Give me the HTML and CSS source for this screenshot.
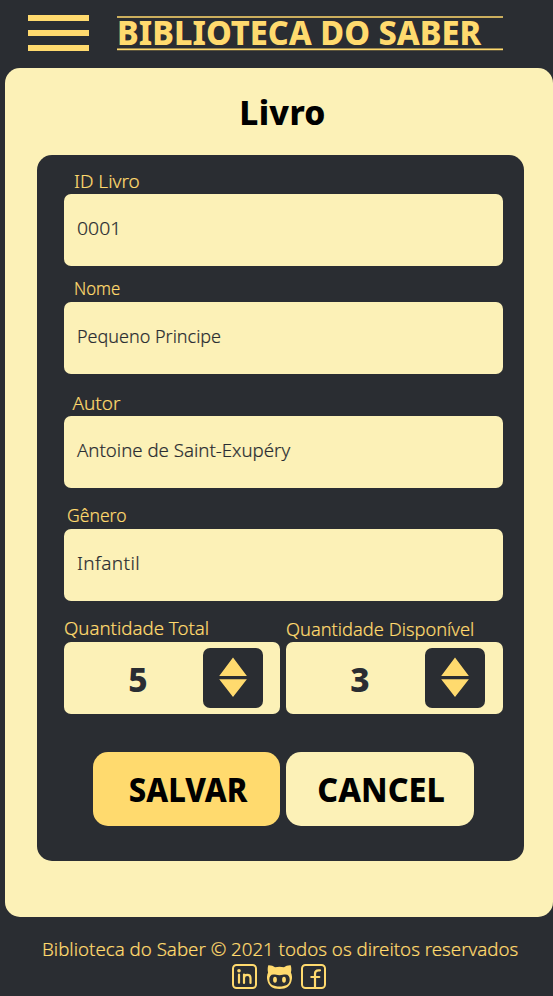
FILE: index.html
```html
<!DOCTYPE html>
<html lang="pt-BR">
<head>
<meta charset="utf-8">
<title>Biblioteca do Saber</title>
<link rel="stylesheet" href="styles.css">
</head>
<body>
<header class="header">
  <div class="menu"><span></span><span></span><span></span></div>
  <div class="brand"><span class="brand-text">BIBLIOTECA DO SABER</span></div>
</header>
<main class="panel">
  <h1 class="title"><span>Livro</span></h1>
  <section class="card">
    <div class="group"><div class="label id"><span>ID Livro</span></div><div class="field"><span class="v-id">0001</span></div></div>
    <div class="group name-group"><div class="label name"><span>Nome</span></div><div class="field"><span class="v-name">Pequeno Principe</span></div></div>
    <div class="group author-group"><div class="label author"><span>Autor</span></div><div class="field"><span class="v-author">Antoine de Saint-Exupéry</span></div></div>
    <div class="group genre-group"><div class="label genre"><span>Gênero</span></div><div class="field"><span class="v-genre">Infantil</span></div></div>
    <div class="quantities">
      <div class="group">
        <div class="label total"><span>Quantidade Total</span></div>
        <div class="counter"><span class="number">5</span><svg class="stepper" viewBox="0 0 59.5 59.5"><path d="M30 9.500 43.900 27.900H16.200zM16.200 31.300H43.900L30 48.900z"/></svg></div>
      </div>
      <div class="group">
        <div class="label available"><span>Quantidade Disponível</span></div>
        <div class="counter"><span class="number">3</span><svg class="stepper" viewBox="0 0 59.5 59.5"><path d="M30 9.500 43.900 27.900H16.200zM16.200 31.300H43.900L30 48.900z"/></svg></div>
      </div>
    </div>
    <div class="actions">
      <div class="button save"><span>SALVAR</span></div>
      <div class="button cancel"><span>CANCEL</span></div>
    </div>
  </section>
</main>
<footer class="footer">
  <div class="copyright"><span>Biblioteca do Saber © 2021 todos os direitos reservados</span></div>
  <div class="social">
    <svg viewBox="0 0 25 25"><rect class="line" x="1" y="1" width="23" height="23" rx="3.5"/><circle cx="7" cy="6.7" r="1.8"/><path class="stroke" d="M7 10.5v8.2M12 19v-8.5M12 14c0-4.300 6.500-4.300 6.500 0v5"/></svg>
    <svg viewBox="0 0 25 25"><path fill-rule="evenodd" d="M1.300 1.200C4 1 6.300 2 8 3.300c3-.7 6-.7 9 0C18.700 2 21 1 23.700 1.200c.8 2.500.8 5 .2 7.300 1 2 1.400 4.500.9 7C23.800 22 19.500 25 12.500 25S1.200 22 .2 15.500c-.5-2.500-.1-5 .9-7C.5 6.200.5 3.700 1.300 1.200zM6.500 10.500C3.700 10.500 2.300 12.500 2.300 15.500c0 5 4.200 7 10.200 7S22.700 20.500 22.700 15.500c0-3-1.400-5-4.200-5-2 0-3.500.7-6 .7s-4-.7-6-.7z"/><ellipse cx="8" cy="15.700" rx="1.900" ry="3"/><ellipse cx="17" cy="15.700" rx="1.900" ry="3"/></svg>
    <svg viewBox="0 0 25 25"><rect class="line" x="1" y="1" width="23" height="23" rx="3.5"/><path class="stroke" d="M19 6.300h-1.500c-2.500 0-3.500 1.200-3.500 3.500V23M10.300 13h8"/></svg>
  </div>
</footer>
</body>
</html>
```
FILE: styles.css
```css
* { box-sizing: border-box; }
body { margin: 0; height: 996px; overflow: hidden; background: #2a2d32; color: #ffda6e; font-family: "Noto Sans", sans-serif; font-weight: 300; font-size: 19px; white-space: nowrap; }
.header { height: 67.5px; display: flex; align-items: flex-start; padding: 15px 0 0 28.300px; }
.menu { width: 60.500px; display: grid; gap: 9px; }
.menu span { height: 6px; background: #ffda6e; }
.brand { margin: 1px 0 0 28.400px; width: 385.500px; height: 34px; line-height: 28px; border-top: 2px solid #cbae5d; border-bottom: 1px solid #ffda6e; box-shadow: 0 1px #5b543d, inset 0 -1px #9b8951; font-size: 33.500px; font-weight: 800; }
.panel { margin-left: 4.700px; height: 849px; padding: 0 29.500px 0 32.800px; background: #fcf1b7; border-radius: 15px; }
.title { margin: 0; height: 87px; line-height: 88px; padding-left: 4px; text-align: center; color: #000; font-size: 33.500px; font-weight: 800; }
.card { height: 706.500px; padding: 12px 21px 0 27px; border-radius: 15px; background: #2a2d32; }
.label { height: 27px; line-height: 27px; }
.id, .name { padding-left: 9.500px; }
.id, .author { line-height: 28px; }
.author { padding-left: 8px; }
.genre { padding-left: 2.500px; }
.available { line-height: 28px; }
.field { height: 72.500px; line-height: 68px; padding-left: 12.500px; border-radius: 7px; background: #fcf1b7; color: #2a2d32; }
.name-group { margin-top: 8.500px; }
.author-group { margin-top: 14.500px; }
.genre-group { margin-top: 13.500px; }
.quantities { margin-top: 13.500px; display: grid; grid-template-columns: 1fr 1fr; gap: 6px; }
.counter { height: 72.500px; display: flex; align-items: center; border-radius: 7px; background: #fcf1b7; color: #2a2d32; }
.number { width: 139px; padding-left: 8px; text-align: center; line-height: 50px; padding-top: 3px; font-size: 33.500px; font-weight: 800; }
.stepper { width: 59.500px; height: 59.500px; border-radius: 7px; background: #2a2d32; fill: #ffda6e; }
.actions { margin: 37.500px 28.500px 0; display: grid; grid-template-columns: 1fr 1fr; gap: 6px; }
.button { height: 74.500px; line-height: 74px; text-align: center; border-radius: 15px; color: #000; font-size: 33.500px; font-weight: 800; }
.save { background: #ffda6e; padding-left: 3px; }
.cancel { background: #fcf1b7; padding-left: 1px; }
.copyright { margin-top: 18px; padding-left: 42px; height: 29px; line-height: 28px; }
.social { margin-left: 232px; display: flex; gap: 9.500px; }
.social svg { width: 25px; height: 25px; fill: #ffda6e; }
.social .line { fill: none; stroke: #ffda6e; stroke-width: 2; }
.social .stroke { fill: none; stroke: #ffda6e; stroke-width: 2.200; stroke-linecap: round; }

/* Condensed widths for the lettering */
.brand span, .label span, .field span, .copyright span { display: inline-block; transform-origin: left; }
.button span { display: inline-block; }
.label, .field, .copyright { -webkit-text-stroke: 0.2px currentColor; }
.brand-text { transform: scaleX(.971); }
.title { letter-spacing: .3px; }
.name span { transform: scaleX(.88); }
.genre span { transform: scaleX(.925); }
.total span { transform: scaleX(.983); }
.available span { transform: scaleX(.962); }
.copyright span { transform: scaleX(.984); }
.v-id { transform: scaleX(1.02); }
.v-name { transform: scaleX(.947); }
.v-author { transform: scaleX(.982); }
.v-genre { letter-spacing: .4px; }
.save span { transform: scaleX(.925); }
.cancel span { transform: scaleX(.965); }
```
